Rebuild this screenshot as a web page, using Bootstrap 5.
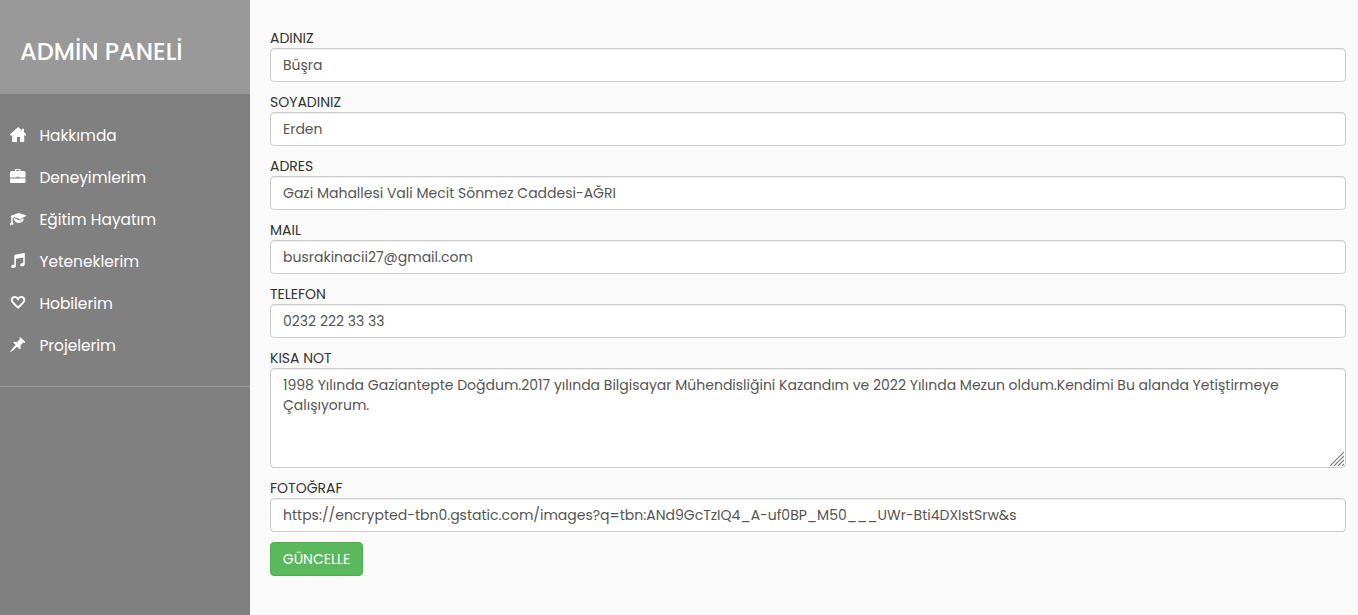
<!DOCTYPE html>
<html lang="tr">
<head>
<meta charset="utf-8">
<meta name="viewport" content="width=device-width, initial-scale=1">
<title>Admin Paneli</title>
<link href="https://cdn.jsdelivr.net/npm/bootstrap@5.3.0/dist/css/bootstrap.min.css" rel="stylesheet">
<style>
body { font: 14px/20px Poppins, Inter, "Open Sans", sans-serif; background: #fafafa; color: #333; }
.sidebar { width: 250px; min-height: 100vh; background: #808080; color: #fff; }
.sidebar-header { height: 94px; padding: 10px 20px 0; background: #999; }
.sidebar-header h3 { font-size: 24px; font-weight: 500; line-height: 26px; white-space: nowrap; }
.menu { padding: 20px 0; border-bottom: 1px solid #999; }
.menu a { height: 42px; padding: 0 10px; font-size: 15.4px; color: #fff; text-decoration: none; }
.menu svg { width: 16px; height: 16px; margin-right: 13.4px; fill: #fff; flex: none; }
.menu span { padding-top: 2px; }
.content { padding: 28px 12px 0 20px; }
.field { margin-bottom: 10px; }
.field label { display: block; width: max-content; height: 20px; }
.field .form-control { height: 34px; padding: 6px 12px; font-size: 14px; line-height: 20px; color: #555; border: 1px solid #ccc; border-radius: 4px; box-shadow: inset 0 1px 1px rgba(0,0,0,.075); }
.field textarea.form-control { height: 100px; min-height: 0; resize: none; overflow: hidden; display: block; }
.grip { right: 2px; bottom: 2px; width: 14px; height: 14px; pointer-events: none; }
.btn-update { width: 93px; height: 34px; padding: 0; font-size: 14px; line-height: 20px; color: #fff; background: #5cb85c; border: 1px solid #4cae4c; border-radius: 4px; }
</style>
</head>
<body>
<div class="d-flex">
  <nav class="sidebar flex-shrink-0">
    <div class="sidebar-header d-flex align-items-center"><h3 class="m-0">ADMİN PANELİ</h3></div>
    <div class="menu">
      <a href="#" class="d-flex align-items-center"><svg viewBox="0 0 16 16"><path d="M8.200 0 0 7.600v.9h2.200V15H7V10h3v5h4.200V8.500h2.300v-.9L14 5.200V1.700h-2v1.700z"/></svg><span>Hakkımda</span></a>
      <a href="#" class="d-flex align-items-center"><svg viewBox="0 0 16 16"><path d="M5 2V1Q5 0 6 0h3.500q1 0 1 1v1h3.300Q15.500 2 15.500 3.700v4.800H9V7.800H6.500v.7H0V3.700Q0 2 1.700 2zm1.200 0h3.100v-.9H6.200zM0 9.400h15.500v3.700q0 .9-.9.900H.9Q0 14 0 13.100z"/></svg><span>Deneyimlerim</span></a>
      <a href="#" class="d-flex align-items-center"><svg viewBox="0 0 16 16"><path d="M.3 5 8.500 2l8.300 2.600L10.300 8.300 4.100 6l-.8.500 5.900 3 4.200-2.300v2.400Q11.500 12 9.200 12 6 12 4.200 9.400V7.600L2.600 6.900v3.300l1.300 3.300-1.200-.4v1.300l-1.200-.8-1 1.100L0 13l1.200-2.600V6z"/></svg><span>Eğitim Hayatım</span></a>
      <a href="#" class="d-flex align-items-center"><svg viewBox="0 0 16 16"><path d="M4.300 2.500Q4.300 2 4.900 1.800L14.100.1q.7-.1.700.6v10.200q0 1.400-1.300 2-1.700.7-2.700.1-1.200-.9-.3-2 .9-1.100 2.700-1V4.500L5.900 5.700v7q0 1.400-1.400 2-1.700.7-2.800.1-1.200-.9-.3-2 .9-1.200 2.900-1z"/></svg><span>Yeteneklerim</span></a>
      <a href="#" class="d-flex align-items-center"><svg viewBox="0 0 16 16"><path d="M8.100 4C6.500.9 1.800 1.300 1.800 5.100c0 2.700 3.300 4.300 6.300 7.500 3-3.200 6.200-4.800 6.200-7.500 0-3.800-4.600-4.200-6.200-1.100z" fill="none" stroke="#fff" stroke-width="1.900"/></svg><span>Hobilerim</span></a>
      <a href="#" class="d-flex align-items-center"><svg viewBox="0 0 16 16"><path d="M10.300 0 15.300 5l-.8.9-1.400-.3-2.700 2.900.3 2.900-1 .9-2.600-2.600Q4 13 .2 15.200L0 15Q2.400 11 5.700 8.100L3.200 5.600l.9-.9 2.900.2 2.900-2.700L9.500.8z"/></svg><span>Projelerim</span></a>
    </div>
  </nav>
  <main class="content flex-grow-1">
    <form>
      <div class="field"><label for="ad">ADINIZ</label><input id="ad" class="form-control" value="Büşra"></div>
      <div class="field"><label for="soyad">SOYADINIZ</label><input id="soyad" class="form-control" value="Erden"></div>
      <div class="field"><label for="adres">ADRES</label><input id="adres" class="form-control" value="Gazi Mahallesi Vali Mecit Sönmez Caddesi-AĞRI"></div>
      <div class="field"><label for="mail">MAIL</label><input id="mail" class="form-control" value="busrakinacii27@gmail.com"></div>
      <div class="field"><label for="tel">TELEFON</label><input id="tel" class="form-control" value="0232 222 33 33"></div>
      <div class="field"><label for="not">KISA NOT</label>
        <div class="position-relative"><textarea id="not" class="form-control">1998 Yılında Gaziantepte Doğdum.2017 yılında Bilgisayar Mühendisliğini Kazandım ve 2022 Yılında Mezun oldum.Kendimi Bu alanda Yetiştirmeye Çalışıyorum.</textarea>
        <svg class="grip position-absolute" viewBox="0 0 14 14" stroke="#777" stroke-width="1.100"><path d="M0 14 14 0M4 14 14 4M8 14l6-6M12 14l2-2"/></svg></div></div>
      <div class="field"><label for="foto">FOTOĞRAF</label><input id="foto" class="form-control" value="https://encrypted-tbn0.gstatic.com/images?q=tbn:ANd9GcTzIQ4_A-uf0BP_M50___UWr-Bti4DXIstSrw&amp;s"></div>
      <button type="button" class="btn btn-update">GÜNCELLE</button>
    </form>
  </main>
</div>
<script src="https://cdn.jsdelivr.net/npm/bootstrap@5.3.0/dist/js/bootstrap.bundle.min.js"></script>
</body>
</html>
